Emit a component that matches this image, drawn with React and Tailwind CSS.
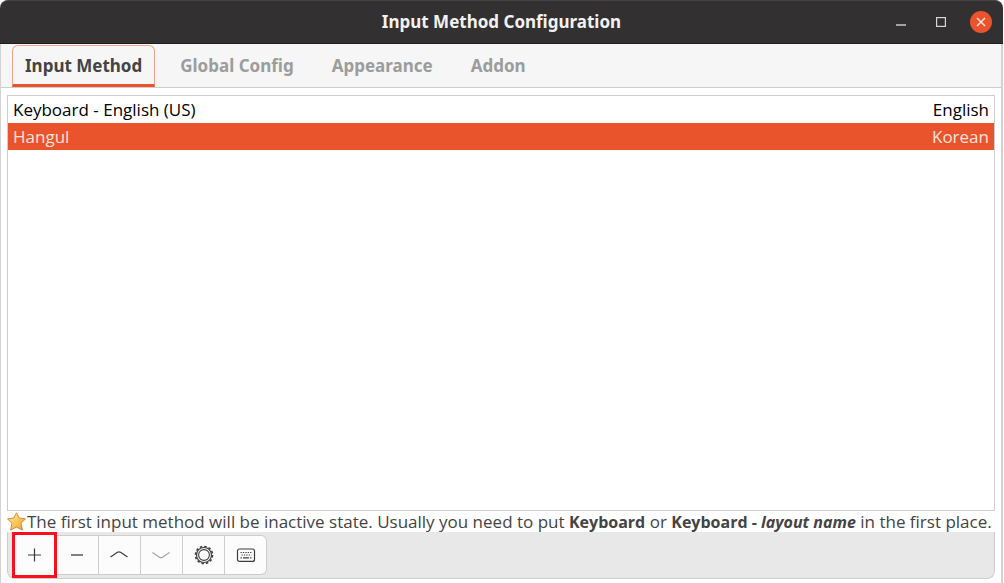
import React, { useState } from "react";

const tabs = ["Input Method", "Global Config", "Appearance", "Addon"];

const inputMethods = [
  { name: "Keyboard - English (US)", language: "English" },
  { name: "Hangul", language: "Korean" },
];

const PlusIcon = () => (
  <svg width="16" height="16" viewBox="0 0 16 16" stroke="#3d3d3d" strokeWidth="1.2">
    <path d="M1 8h13M7.5 1.5v13" />
  </svg>
);

const MinusIcon = () => (
  <svg width="16" height="16" viewBox="0 0 16 16" stroke="#3d3d3d" strokeWidth="1.3">
    <path d="M1 8h12" />
  </svg>
);

const UpIcon = () => (
  <svg width="20" height="16" viewBox="0 0 20 16" fill="none" stroke="#3d3d3d" strokeWidth="1.2">
    <path d="M0.5 10l7-4.7q1.5-1 3 0l7 4.7" />
  </svg>
);

const DownIcon = () => (
  <svg width="20" height="16" viewBox="0 0 20 16" fill="none" stroke="#a3a3a3" strokeWidth="1.2">
    <path d="M0.5 5.5l7 4.7q1.5 1 3 0l7-4.7" />
  </svg>
);

const GearIcon = () => (
  <svg width="20" height="20" viewBox="0 0 20 20" fill="none" stroke="#3d3d3d">
    <circle cx="10" cy="10" r="8.6" strokeWidth="1.5" strokeDasharray="2.5 2" />
    <circle cx="10" cy="10" r="7.5" strokeWidth="1.2" />
    <circle cx="10" cy="10" r="5.4" strokeWidth="1.1" />
  </svg>
);

const KeyboardIcon = () => (
  <svg width="20" height="16" viewBox="0 0 20 16" fill="none" stroke="#3d3d3d">
    <rect x="1.5" y="2" width="17" height="12.4" rx="2" strokeWidth="1.2" />
    <path d="M4.5 5.5h11" strokeWidth="1.2" strokeDasharray="1.3 1.1" />
    <path d="M5.5 8h10" strokeWidth="1.2" strokeDasharray="1.3 1.1" />
    <path d="M4.5 10.8h1.4M7 10.8h6M14.1 10.8h1.4" strokeWidth="1.2" />
  </svg>
);

const StarIcon = () => (
  <svg width="20" height="19" viewBox="0 0 20 19" className="shrink-0">
    <defs>
      <linearGradient id="star" x1="0" y1="0" x2="1" y2="1">
        <stop offset="0" stopColor="#fff0b0" />
        <stop offset="0.5" stopColor="#fbc95c" />
        <stop offset="1" stopColor="#f09a2c" />
      </linearGradient>
    </defs>
    <path
      d="M9.5 .8l2.7 5.2 6.3.9-4.5 4.2 1.4 6.9-5.9-2.9L3.6 18 5 11.1.5 6.9 6.8 6z"
      fill="url(#star)"
      stroke="#d98b32"
      strokeWidth="1"
      strokeLinejoin="round"
    />
  </svg>
);

const actions = [
  { label: "Add", icon: PlusIcon },
  { label: "Remove", icon: MinusIcon },
  { label: "Move up", icon: UpIcon },
  { label: "Move down", icon: DownIcon, disabled: true },
  { label: "Configure", icon: GearIcon },
  { label: "Keyboard layout", icon: KeyboardIcon },
];

const TitleBar = () => (
  <header className="grid h-11 grid-cols-[1fr_auto_1fr] items-center rounded-t-lg border-t border-b border-t-[#454344] border-b-[#1f1d1e] bg-[#323031]">
    <h1 className="col-start-2 font-['Noto_Sans',sans-serif] font-bold text-[#f2f2f2]">
      Input Method Configuration
    </h1>
    <div className="flex items-center justify-end gap-[18px] pr-[11px]">
      <button aria-label="Minimize" className="flex size-[22px] items-center justify-center">
        <svg width="10" height="10" viewBox="0 0 10 10" stroke="#d6d6d6">
          <path d="M0 8h10" strokeWidth="1.4" />
        </svg>
      </button>
      <button aria-label="Maximize" className="flex size-[22px] items-center justify-center">
        <svg width="10" height="10" viewBox="0 0 10 10" fill="none" stroke="#d6d6d6">
          <rect x="0.6" y="0.6" width="8.8" height="8.8" strokeWidth="1.2" />
        </svg>
      </button>
      <button
        aria-label="Close"
        className="flex size-[22px] items-center justify-center rounded-full bg-[#e9542c]"
      >
        <svg width="10" height="10" viewBox="0 0 10 10" stroke="#fbe3dc">
          <path d="M1 1l8 8M9 1L1 9" strokeWidth="1.5" />
        </svg>
      </button>
    </div>
  </header>
);

const App = () => {
  const [activeTab, setActiveTab] = useState("Input Method");
  const [selected, setSelected] = useState("Hangul");

  return (
    <div className="flex min-h-screen flex-col bg-white pr-px font-['Open_Sans','Noto_Sans',sans-serif] text-[17px] text-[#444]">
      <TitleBar />
      <div className="flex flex-1 flex-col border-r-2 border-l border-[#d2d2d2]">
        <nav
          role="tablist"
          className="flex h-11 items-end gap-3 border-b border-[#cdcdcd] bg-[#f6f6f6] pl-[11px] font-['Noto_Sans',sans-serif]"
        >
          {tabs.map((tab) => (
            <button
              key={tab}
              role="tab"
              aria-selected={tab === activeTab}
              onClick={() => setActiveTab(tab)}
              className={
                tab === activeTab
                  ? "h-[42px] rounded-t-md border border-b-[3px] border-[#f2a48c] border-b-[#e9542c] px-3 pt-0.5 font-bold text-[#444]"
                  : "h-[42px] border border-b-[3px] border-transparent px-3 pt-0.5 font-bold text-[#9c9c9c]"
              }
            >
              {tab}
            </button>
          ))}
        </nav>
        <main className="flex flex-1 flex-col px-1.5 pt-[7px] pb-1">
          <div className="flex-1 border border-[#cdcdcd]">
            <table className="w-full text-black">
              <tbody>
                {inputMethods.map((im) => (
                  <tr
                    key={im.name}
                    onClick={() => setSelected(im.name)}
                    className={im.name === selected ? "bg-[#e9542c] text-[#fbe3dc]" : ""}
                  >
                    <td className="h-[27px] pl-[5px] leading-6">{im.name}</td>
                    <td className="h-[27px] pr-[5px] text-right leading-6">{im.language}</td>
                  </tr>
                ))}
              </tbody>
            </table>
          </div>
          <div className="flex h-[21px] items-center whitespace-nowrap">
            <StarIcon />
            <p>
              The first input method will be inactive state. Usually you need to put{" "}
              <b className="text-base">Keyboard</b> or{" "}
              <b className="text-base">
                Keyboard - <i>layout name</i>
              </b>{" "}
              in the first place.
            </p>
          </div>
          <div className="flex rounded-b-lg border border-t-0 border-[#cdcdcd] bg-[#e8e8e8] pl-1">
            {actions.map(({ label, icon: Icon, disabled }, i) => (
              <button
                key={label}
                aria-label={label}
                disabled={disabled}
                className={
                  i === 0
                    ? "flex h-[46px] w-[45px] items-center justify-center border-[3px] border-[#fb0f1c] bg-[#fcfcfc]"
                    : i === actions.length - 1
                    ? "my-[3px] flex h-10 w-[42px] items-center justify-center rounded-r-md border border-l-0 border-[#cdcdcd] bg-[#fcfcfc]"
                    : "my-[3px] flex h-10 w-[42px] items-center justify-center border border-l-0 border-[#cdcdcd] bg-[#fcfcfc]"
                }
              >
                <Icon />
              </button>
            ))}
          </div>
        </main>
      </div>
    </div>
  );
};

export default App;
